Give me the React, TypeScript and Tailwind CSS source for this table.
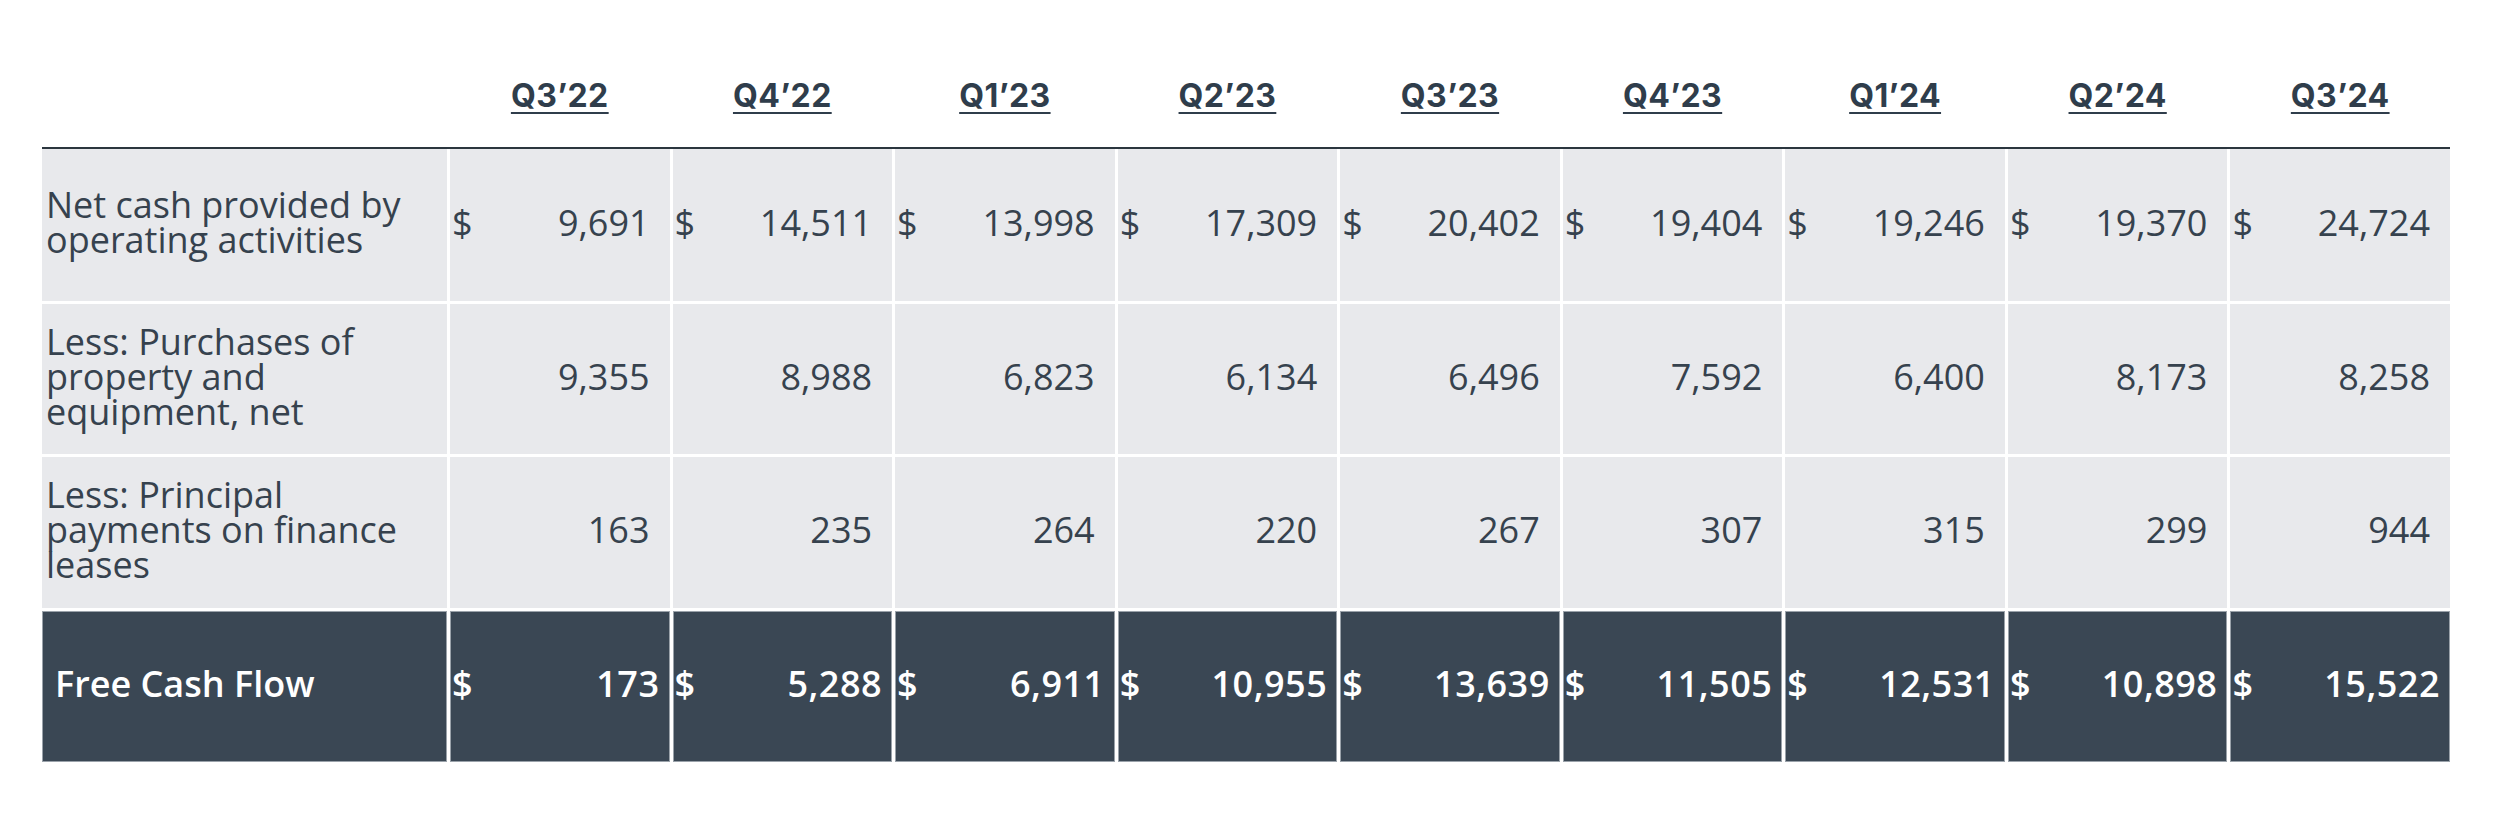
import React from "react";

const quarters = ["Q3\u201922", "Q4\u201922", "Q1\u201923", "Q2\u201923", "Q3\u201923", "Q4\u201923", "Q1\u201924", "Q2\u201924", "Q3\u201924"];

const ocf = ["9,691", "14,511", "13,998", "17,309", "20,402", "19,404", "19,246", "19,370", "24,724"];
const capex = ["9,355", "8,988", "6,823", "6,134", "6,496", "7,592", "6,400", "8,173", "8,258"];
const leases = ["163", "235", "264", "220", "267", "307", "315", "299", "944"];
const fcf = ["173", "5,288", "6,911", "10,955", "13,639", "11,505", "12,531", "10,898", "15,522"];

function LightCell({ value, dollar, h }: { value: string; dollar?: boolean; h: string }) {
  return (
    <div className={`flex items-center justify-between bg-[#e8e9ec] pb-[6px] pl-[2px] pr-[20px] ${h}`}>
      <span>{dollar ? "$" : ""}</span>
      <span>{value}</span>
    </div>
  );
}

function DarkCell({ value }: { value: string }) {
  return (
    <div className="flex h-[151px] items-center justify-between border border-[#9aa2aa] bg-[#3a4754] pb-[6px] pl-[1px] pr-[9px] font-semibold text-white">
      <span>$</span>
      <span className="tracking-[0.5px]">{value}</span>
    </div>
  );
}

export default function App() {
  return (
    <div className="min-h-[822px] w-[2494px] bg-white font-['Open_Sans',sans-serif] text-[36px] leading-[35px] text-[#36424e]">
      <div className="ml-[42px] w-[2408px]">
        <div className="grid h-[147px] grid-cols-[405px_repeat(9,minmax(0,1fr))] gap-x-[3px]">
          <div />
          {quarters.map((q) => (
            <div key={q} className="flex items-end justify-center pb-[33px]">
              <span className="font-['Inter',sans-serif] text-[32px] font-bold leading-[36px] tracking-[0.4px] text-[#2f3d4b] underline decoration-[2px] underline-offset-[5px]">
                {q}
              </span>
            </div>
          ))}
        </div>
        <div className="h-[2px] bg-[#2b363e]" />
        <div className="grid grid-cols-[405px_repeat(9,minmax(0,1fr))] gap-[3px]">
          <div className="flex h-[152px] items-center whitespace-nowrap bg-[#e8e9ec] pb-[6px] pl-[4px]">
            <span>
              Net cash provided by
              <br />
              operating activities
            </span>
          </div>
          {ocf.map((v) => (
            <LightCell key={"o" + v} value={v} dollar h="h-[152px]" />
          ))}

          <div className="flex h-[150px] items-center whitespace-nowrap bg-[#e8e9ec] pb-[6px] pl-[4px]">
            <span>
              Less: Purchases of
              <br />
              property and
              <br />
              equipment, net
            </span>
          </div>
          {capex.map((v) => (
            <LightCell key={"c" + v} value={v} h="h-[150px]" />
          ))}

          <div className="flex h-[151px] items-center whitespace-nowrap bg-[#e8e9ec] pb-[6px] pl-[4px]">
            <span>
              Less: Principal
              <br />
              payments on finance
              <br />
              leases
            </span>
          </div>
          {leases.map((v) => (
            <LightCell key={"l" + v} value={v} h="h-[151px]" />
          ))}

          <div className="flex h-[151px] items-center border border-[#9aa2aa] bg-[#3a4754] pb-[6px] pl-[12px] font-semibold text-white">
            Free Cash Flow
          </div>
          {fcf.map((v) => (
            <DarkCell key={"f" + v} value={v} />
          ))}
        </div>
      </div>
    </div>
  );
}
